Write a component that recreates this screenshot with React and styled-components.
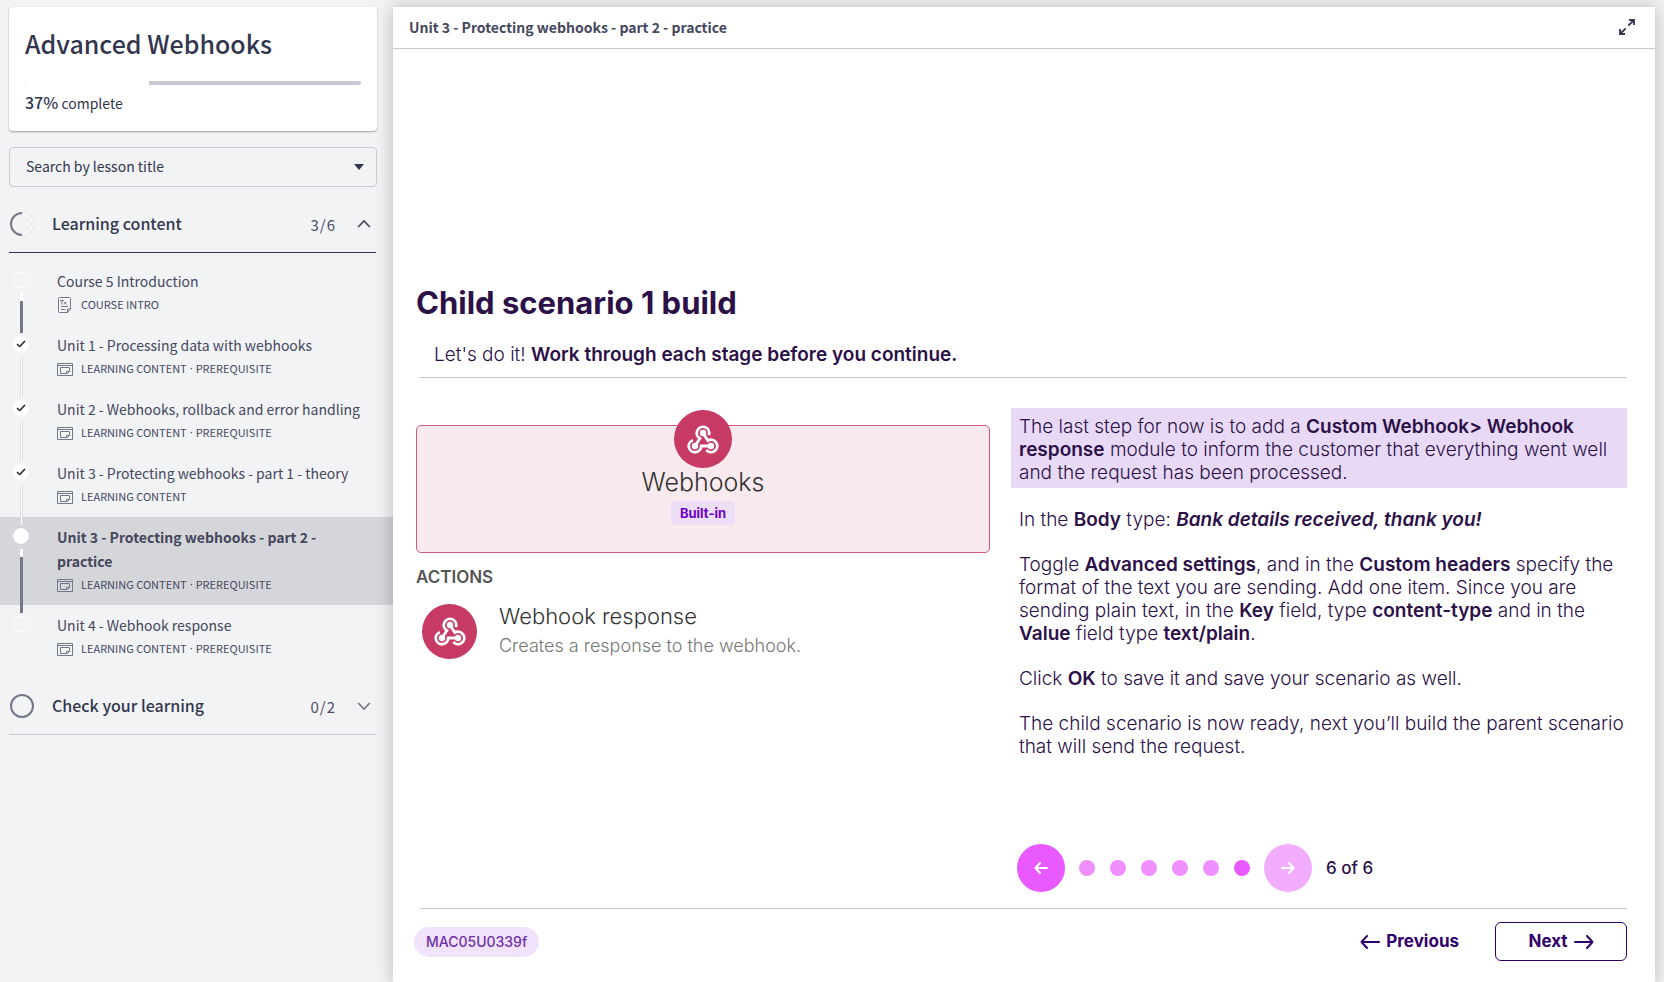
import React from "react";
import styled, { createGlobalStyle, css } from "styled-components";

const GlobalStyle = createGlobalStyle`
  *, *::before, *::after { box-sizing: border-box; }
  body {
    margin: 0;
    background: #f1f3f5;
    color: #33364d;
    font-family: "Noto Sans CJK SC", "Noto Sans", sans-serif;
    font-size: 14px;
  }
  h1, h2, h3, p, ol { margin: 0; padding: 0; }
  ol { list-style: none; }
  button, select { font: inherit; color: inherit; cursor: pointer; }
  b, strong { font-weight: 600; }
`;

const Page = styled.div`
  display: flex;
  min-height: 100vh;
`;

/* Sidebar */

const Sidebar = styled.aside`
  flex: 0 0 393px;
  padding-top: 7px;
`;

const CourseCard = styled.section`
  margin: 0 16px 0 9px;
  padding: 16px;
  height: 124px;
  background: #fff;
  border-radius: 4px;
  box-shadow: 0 1px 2px rgba(0, 0, 0, 0.35);
`;

const CourseTitle = styled.h1`
  font-size: 25px;
  font-weight: 500;
  line-height: 40px;
`;

const ProgressTrack = styled.div`
  height: 4px;
  margin-top: 18px;
  border-radius: 2px;
  background: #c7c9d4;
  overflow: hidden;
`;

const ProgressFill = styled.div`
  height: 100%;
  background: #fff;
`;

const ProgressText = styled.p`
  margin-top: 5px;
  line-height: 24px;

  strong { font-size: 16px; font-weight: 500; }
`;

const SearchBox = styled.div`
  display: grid;
  align-items: center;
  margin: 16px 16px 0 9px;

  & > * { grid-area: 1 / 1; }
  svg { justify-self: end; margin-right: 13px; pointer-events: none; }
`;

const SearchSelect = styled.select`
  appearance: none;
  width: 100%;
  height: 40px;
  padding: 0 16px 2px;
  border: 1px solid #c7c9d4;
  border-radius: 4px;
  background: transparent;
`;

const SectionHeader = styled.button`
  display: flex;
  align-items: center;
  width: calc(100% - 26px);
  height: 57px;
  margin: 9px 17px 0 9px;
  padding: 0 5px 0 1px;
  border: 0;
  border-bottom: 1px solid ${(p) => (p.$open ? "#33314f" : "#c7c9d4")};
  background: none;
  text-align: left;
`;

const SectionTitle = styled.span`
  flex: 1;
  margin-left: 18px;
  padding-bottom: 2px;
  font-size: 16px;
  font-weight: 500;
  line-height: 24px;
`;

const SectionCount = styled.span`
  margin-right: 21px;
  font-size: 15px;
  letter-spacing: 1px;
  color: #4d4f66;
`;

const LessonList = styled.ol`
  padding-top: 8px;
`;

const Lesson = styled.li`
  display: flex;
  padding: 0 24px 0 13px;
  background: ${(p) => (p.$active ? "#d5d6da" : "transparent")};
`;

const Rail = styled.div`
  position: relative;
  z-index: 1;
  display: flex;
  flex-direction: column;
  align-items: center;
  gap: 5px;
  width: 16px;
  margin-right: 28px;
  margin-bottom: -8px;
  padding-top: 11px;
`;

const Marker = styled.span`
  display: flex;
  align-items: center;
  justify-content: center;
  flex: none;
  width: 16px;
  height: 16px;
  border: 1px solid #fff;
  border-radius: 50%;
  background: ${(p) => (p.$filled ? "#fff" : "transparent")};
`;

const Track = styled.span`
  flex: 1;
  width: 3px;
  border: solid #dcdde1;
  border-width: 0 1px;
  background: #fff;
  ${(p) =>
    p.$pending &&
    css`
      border-width: 0;
      background: linear-gradient(#fff 8px, #74768a 8px);
    `}
`;

const LessonBody = styled.div`
  flex: 1;
  padding: 8px 0;
`;

const LessonTitle = styled.h3`
  font-size: 14px;
  font-weight: ${(p) => (p.$active ? 700 : 400)};
  line-height: 24px;
  color: #45475e;
`;

const LessonMeta = styled.div`
  display: flex;
  align-items: center;
  gap: 8px;
  height: 24px;
  font-size: 11px;
  line-height: 22px;
  color: #45475e;
`;

const MetaText = styled.span`
  display: flex;
  gap: 3px;
  padding-bottom: 2px;
`;

const Separator = styled.span`
  font-family: "Noto Sans", sans-serif;
`;

/* Player */

const Player = styled.main`
  flex: 1;
  display: flex;
  flex-direction: column;
  min-width: 0;
  margin: 7px 9px 0 0;
  background: #fff;
  box-shadow: 0 0 16px rgba(0, 0, 0, 0.25);
`;

const PlayerBar = styled.header`
  display: flex;
  align-items: center;
  justify-content: space-between;
  height: 42px;
  padding: 0 20px 2px 16px;
  border-bottom: 1px solid #c7c9d4;
`;

const PlayerTitle = styled.h2`
  font-size: 14px;
  font-weight: 700;
  line-height: 24px;
  color: #45475e;
`;

const IconButton = styled.button`
  display: flex;
  padding: 0;
  border: 0;
  background: none;
`;

const Slide = styled.article`
  display: flex;
  flex-direction: column;
  padding: 232px 28px 20px 23px;
  font-family: Inter, sans-serif;
  font-size: 19px;
  font-weight: 300;
  line-height: 23px;
  color: #2c1048;
`;

const SlideTitle = styled.h2`
  font-size: 31px;
  font-weight: 700;
  line-height: 44px;
`;

const SlideLead = styled.p`
  margin: 18px 0 11px;
  padding-left: 18px;
`;

const Rule = styled.hr`
  width: calc(100% - 4px);
  height: 1px;
  margin: 0 0 0 4px;
  border: 0;
  background: #cbc4ca;
`;

const Columns = styled.div`
  display: grid;
  grid-template-columns: 574fr 616fr;
  column-gap: 21px;
  padding-top: 30px;
`;

const AppCard = styled.div`
  display: flex;
  flex-direction: column;
  align-items: center;
  height: 128px;
  margin-top: 17px;
  border: 1px solid #d4587d;
  border-radius: 5px;
  background: #f9eaef;
`;

const AppIcon = styled.span`
  display: flex;
  align-items: center;
  justify-content: center;
  flex: none;
  width: ${(p) => p.$size}px;
  height: ${(p) => p.$size}px;
  border-radius: 50%;
  background: #c73a63;
  color: #fff;
`;

const CardIcon = styled(AppIcon)`
  margin-top: -16px;
`;

const AppName = styled.h3`
  font-size: 25px;
  font-weight: 300;
  line-height: 28px;
  color: #333;
`;

const Badge = styled.span`
  margin-top: 5px;
  padding: 0 9px;
  border-radius: 4px;
  background: #ecdff5;
  color: #6d00cc;
  font-size: 13px;
  font-weight: 700;
  line-height: 24px;
`;

const ActionsLabel = styled.h3`
  margin-top: 12px;
  font-size: 17px;
  font-weight: 600;
  line-height: 24px;
  color: #555;
`;

const Action = styled.div`
  display: flex;
  align-items: center;
  gap: 22px;
  margin: 12px 0 0 6px;
`;

const ActionTitle = styled.h4`
  margin: 0;
  font-size: 22px;
  font-weight: 300;
  line-height: 30px;
  color: #333;
`;

const ActionText = styled.p`
  font-size: 18px;
  font-weight: 300;
  line-height: 30px;
  color: #777;
`;

const Steps = styled.div`
  display: flex;
  flex-direction: column;
  gap: 22px;
`;

const Step = styled.p`
  padding-left: 8px;
  ${(p) =>
    p.$highlight &&
    css`
      margin-bottom: -2px;
      padding: 7px 8px 4px;
      background: #e8daf6;
    `}
`;

const Pager = styled.nav`
  display: flex;
  align-items: center;
  gap: 14px;
  margin: 86px 0 16px 6px;
`;

const PagerButton = styled.button`
  display: flex;
  align-items: center;
  justify-content: center;
  width: 48px;
  height: 48px;
  padding: 0;
  border: 0;
  border-radius: 50%;
  background: ${(p) => (p.disabled ? "#f3adff" : "#e859ff")};
  color: #fff;
`;

const Dots = styled.div`
  display: flex;
  gap: 15px;
`;

const Dot = styled.button`
  width: 16px;
  height: 16px;
  padding: 0;
  border: 0;
  border-radius: 50%;
  background: ${(p) => (p.$current ? "#e859ff" : "#f08fff")};
`;

const PagerText = styled.span`
  font-size: 17px;
  font-weight: 500;
`;

const SlideFooter = styled.footer`
  display: flex;
  align-items: center;
  gap: 36px;
  padding-top: 13px;
  margin-left: -2px;
`;

const Code = styled.span`
  margin-right: auto;
  padding: 0 12px;
  border-radius: 15px;
  background: #f0e3fb;
  color: #6f30a5;
  font-size: 14px;
  font-weight: 500;
  line-height: 30px;
`;

const NavButton = styled.button`
  display: flex;
  align-items: center;
  justify-content: center;
  gap: 6px;
  height: 39px;
  padding: 0;
  border: 0;
  background: none;
  color: #32006a;
  font-size: 17px;
  font-weight: 700;
  ${(p) =>
    p.$outlined &&
    css`
      width: 132px;
      border: 1px solid #32006a;
      border-radius: 6px;
    `}
`;

const Arrow = ({ back, width = 20, height = 14, stroke = 2 }) => (
  <svg width={width} height={height} viewBox={`0 0 ${width} ${height}`} fill="none" stroke="currentColor" strokeWidth={stroke} strokeLinecap="round" strokeLinejoin="round" aria-hidden="true">
    {back ? (
      <path d={`M${width - 1} ${height / 2}H1.5M${height / 2} 1L1.5 ${height / 2}L${height / 2} ${height - 1}`} />
    ) : (
      <path d={`M1 ${height / 2}H${width - 1.5}M${width - height / 2} 1L${width - 1.5} ${height / 2}L${width - height / 2} ${height - 1}`} />
    )}
  </svg>
);

const WebhookIcon = () => (
  <svg width="32" height="31" viewBox="0 0 32 31" fill="none" stroke="currentColor" strokeWidth="2.8" aria-hidden="true">
    <path d="M8 22L12.9 14.4A6.2 6.2 0 1 1 21.8 11.1" />
    <path d="M16 9L20.9 16.6A6.2 6.2 0 1 1 19.3 26" />
    <path d="M24 22H14.2A6.2 6.2 0 1 1 5.9 16.2" />
    <g fill="currentColor" stroke="none">
      <circle cx="16" cy="9" r="3.2" />
      <circle cx="8" cy="22" r="3.2" />
      <circle cx="24" cy="22" r="3.2" />
    </g>
  </svg>
);

const Chevron = ({ up }) => (
  <svg width="14" height="10" viewBox="0 0 14 10" fill="none" stroke={up ? "#45475e" : "#74768a"} strokeWidth="1.7" aria-hidden="true">
    <path d={up ? "M1.2 8L7 2L12.8 8" : "M1.2 2L7 8L12.8 2"} />
  </svg>
);

const SectionRing = ({ half }) => (
  <svg width="24" height="24" viewBox="0 0 24 24" fill="none" strokeWidth="2" aria-hidden="true">
    {half ? (
      <>
        <path d="M12 1A11 11 0 0 1 12 23" stroke="#dcdde1" />
        <path d="M12 1.5A10.5 10.5 0 0 1 12 22.5" stroke="#fff" strokeWidth="1.4" />
        <path d="M12 1A11 11 0 0 0 12 23" stroke="#74768a" />
      </>
    ) : (
      <circle cx="12" cy="12" r="11" stroke="#74768a" />
    )}
  </svg>
);

const CheckMark = () => (
  <svg width="10" height="8" viewBox="0 0 10 8" fill="none" stroke="#22222e" strokeWidth="1.6" aria-hidden="true">
    <path d="M1 4L3.7 6.5L9 1" />
  </svg>
);

const PageIcon = () => (
  <svg width="16" height="16" viewBox="0 0 16 16" fill="none" stroke="#74768a" aria-hidden="true">
    <path d="M2.5 0.5H12.5Q13.5 0.5 13.5 1.5V12L10.5 15.5H2.5Q1.5 15.5 1.5 14.5V1.5Q1.5 0.5 2.5 0.5ZM13.5 12H10.5V15.5" />
    <path d="M3 3.5H7M5 3.5V7.5M7 5L9.5 7.5M9.5 5L7 7.5M4 9.5H11M4 12.5H8.5" />
  </svg>
);

const WindowIcon = () => (
  <svg width="16" height="13" viewBox="0 0 16 13" fill="none" stroke="#74768a" aria-hidden="true">
    <path d="M0.5 0.5H15.5V12.5H0.5ZM0.5 2.5H15.5M3.5 4.5H12.5V8L10.5 10.5H3.5ZM9.5 10V8.5H12.5" />
  </svg>
);

const ExpandIcon = () => (
  <svg width="16" height="16" viewBox="0 0 16 16" fill="none" stroke="#33364d" strokeWidth="1.8" aria-hidden="true">
    <path d="M9.3 6.7L15 1M10 1H15V6M6.7 9.3L1 15M1 10V15H6" />
  </svg>
);

const LESSONS = [
  { title: "Course 5 Introduction", meta: ["COURSE INTRO"], page: true, pending: true },
  { title: "Unit 1 - Processing data with webhooks", meta: ["LEARNING CONTENT", "PREREQUISITE"], done: true },
  { title: "Unit 2 - Webhooks, rollback and error handling", meta: ["LEARNING CONTENT", "PREREQUISITE"], done: true },
  { title: "Unit 3 - Protecting webhooks - part 1 - theory", meta: ["LEARNING CONTENT"], done: true },
  { title: "Unit 3 - Protecting webhooks - part 2 - practice", meta: ["LEARNING CONTENT", "PREREQUISITE"], active: true, pending: true },
  { title: "Unit 4 - Webhook response", meta: ["LEARNING CONTENT", "PREREQUISITE"], last: true },
];

const PROGRESS = 37;

export default function App() {
  return (
    <>
      <GlobalStyle />
      <Page>
        <Sidebar>
          <CourseCard>
            <CourseTitle>Advanced Webhooks</CourseTitle>
            <ProgressTrack role="progressbar" aria-label="Course progress" aria-valuenow={PROGRESS} aria-valuemin={0} aria-valuemax={100}>
              <ProgressFill style={{ width: `${PROGRESS}%` }} />
            </ProgressTrack>
            <ProgressText>
              <strong>{PROGRESS}%</strong> complete
            </ProgressText>
          </CourseCard>

          <SearchBox>
            <SearchSelect aria-label="Search by lesson title" defaultValue="">
              <option value="">Search by lesson title</option>
              {LESSONS.map((l) => (
                <option key={l.title}>{l.title}</option>
              ))}
            </SearchSelect>
            <svg width="10" height="6" viewBox="0 0 10 6" fill="#33364d" aria-hidden="true">
              <path d="M0 0H10L5 6Z" />
            </svg>
          </SearchBox>

          <SectionHeader type="button" $open aria-expanded="true">
            <SectionRing half />
            <SectionTitle>Learning content</SectionTitle>
            <SectionCount>3/6</SectionCount>
            <Chevron up />
          </SectionHeader>
          <LessonList>
            {LESSONS.map((l) => (
              <Lesson key={l.title} $active={l.active}>
                <Rail>
                  <Marker $filled={l.done || l.active}>{l.done && <CheckMark />}</Marker>
                  {!l.last && <Track $pending={l.pending} />}
                </Rail>
                <LessonBody>
                  <LessonTitle $active={l.active}>{l.title}</LessonTitle>
                  <LessonMeta>
                    {l.page ? <PageIcon /> : <WindowIcon />}
                    <MetaText>
                      <span>{l.meta[0]}</span>
                      {l.meta[1] && (
                        <>
                          <Separator>·</Separator>
                          <span>{l.meta[1]}</span>
                        </>
                      )}
                    </MetaText>
                  </LessonMeta>
                </LessonBody>
              </Lesson>
            ))}
          </LessonList>
          <SectionHeader type="button" aria-expanded="false">
            <SectionRing />
            <SectionTitle>Check your learning</SectionTitle>
            <SectionCount>0/2</SectionCount>
            <Chevron />
          </SectionHeader>
        </Sidebar>

        <Player>
          <PlayerBar>
            <PlayerTitle>Unit 3 - Protecting webhooks - part 2 - practice</PlayerTitle>
            <IconButton type="button" aria-label="Full screen">
              <ExpandIcon />
            </IconButton>
          </PlayerBar>

          <Slide>
            <SlideTitle>Child scenario 1 build</SlideTitle>
            <SlideLead>
              Let's do it! <b>Work through each stage before you continue.</b>
            </SlideLead>
            <Rule />

            <Columns>
              <div>
                <AppCard>
                  <CardIcon $size={58}>
                    <WebhookIcon />
                  </CardIcon>
                  <AppName>Webhooks</AppName>
                  <Badge>Built-in</Badge>
                </AppCard>
                <ActionsLabel>ACTIONS</ActionsLabel>
                <Action>
                  <AppIcon $size={55}>
                    <WebhookIcon />
                  </AppIcon>
                  <div>
                    <ActionTitle>Webhook response</ActionTitle>
                    <ActionText>Creates a response to the webhook.</ActionText>
                  </div>
                </Action>
              </div>

              <div>
                <Steps>
                  <Step $highlight>
                    The last step for now is to add a <b>Custom Webhook&gt; Webhook response</b> module to inform the customer that everything went well and the request has been processed.
                  </Step>
                  <Step>
                    In the <b>Body</b> type: <b><i>Bank details received, thank you!</i></b>
                  </Step>
                  <Step>
                    Toggle <b>Advanced settings</b>, and in the <b>Custom headers</b> specify the format of the text you are sending. Add one item. Since you are sending plain text, in the <b>Key</b> field, type <b>content-type</b> and in the <b>Value</b> field type <b>text/plain</b>.
                  </Step>
                  <Step>
                    Click <b>OK</b> to save it and save your scenario as well.
                  </Step>
                  <Step>The child scenario is now ready, next you’ll build the parent scenario that will send the request.</Step>
                </Steps>
                <Pager aria-label="Stages">
                  <PagerButton type="button" aria-label="Previous stage">
                    <Arrow back width={14} height={12} />
                  </PagerButton>
                  <Dots>
                    {[1, 2, 3, 4, 5, 6].map((n) => (
                      <Dot key={n} type="button" aria-label={`Stage ${n}`} $current={n === 6} />
                    ))}
                  </Dots>
                  <PagerButton type="button" aria-label="Next stage" disabled>
                    <Arrow width={14} height={12} />
                  </PagerButton>
                  <PagerText>6 of 6</PagerText>
                </Pager>
              </div>
            </Columns>
            <Rule />

            <SlideFooter>
              <Code>MAC05U0339f</Code>
              <NavButton type="button">
                <Arrow back />
                Previous
              </NavButton>
              <NavButton type="button" $outlined>
                Next
                <Arrow />
              </NavButton>
            </SlideFooter>
          </Slide>
        </Player>
      </Page>
    </>
  );
}
